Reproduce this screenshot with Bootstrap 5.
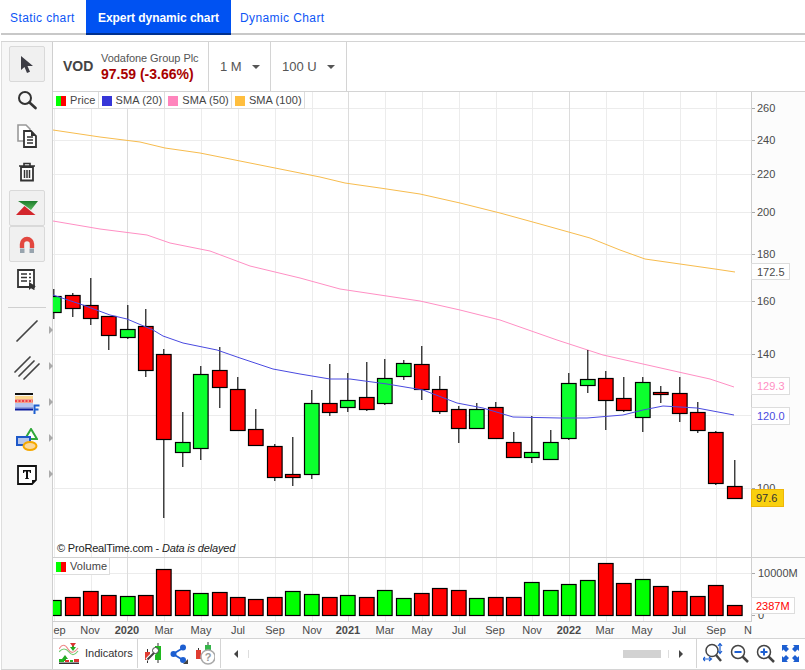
<!DOCTYPE html>
<html lang="en">
<head>
<meta charset="utf-8">
<title>Vodafone chart</title>
<link href="https://cdn.jsdelivr.net/npm/bootstrap@5.3.0/dist/css/bootstrap.min.css" rel="stylesheet">
<style>
html,body{height:670px;overflow:hidden;background:#fff}
body{font-family:"Liberation Sans",Arial,sans-serif;color:#444}
.tabbar{height:35px;margin-left:1px;border-bottom:2px solid #c8c8c8}
.tabbar .nav-link{font-size:12px;letter-spacing:.4px;height:35px;padding:9px 9px 0 9px;color:#0d55f5;border-radius:0;white-space:nowrap}
.tabbar .nav-link:first-child{width:85px}
.tabbar .nav-link.active{background:#0052f2;color:#fff;font-weight:700;padding:9px 0 0;text-align:center;letter-spacing:-.05px;border-bottom:2px solid #00308f;width:145px}
.frame{margin:6px 0 0 1px;height:629px;border-top:1px solid #d4d4d4;border-bottom:1px solid #d4d4d4}
.toolside{width:52px;background:#f7f7f7;border-left:1px solid #dedede;border-right:1px solid #cfcfcf;padding-top:4px}
.toolcell{width:36px;height:36px;margin-left:7px;flex:none;position:relative}
.toolcell.on{background:#f0f0f0;border:1px solid #d9d9d9;border-radius:2px}
.toolcell.more::after{content:"";position:absolute;left:40px;top:13px;border-left:4px solid #aaa;border-top:4px solid transparent;border-bottom:4px solid transparent}
.toolsep{height:15px;flex:none;margin:0 6px}
.toolsep::after{content:"";display:block;height:1px;background:#d0d0d0;margin-top:9px}
.mainpane{width:752px}
.headbar{height:50px;border-bottom:1px solid #d4d4d4;background:#fff}
.headcell{height:49px;border-right:1px solid #d4d4d4}
.symcell{width:156px;padding-left:10px}
.symb{font-size:14px;font-weight:700;width:38px}
.symname{font-size:11px;line-height:13px;color:#555;letter-spacing:-.05px}
.symprice{font-size:14px;line-height:15px;font-weight:700;color:#a80000;margin-top:2px}
.pickcell{font-size:13px;padding-left:11px;color:#555}
.pick-a{width:62px}
.pick-b{width:76px}
.caret-down{display:inline-block;margin-left:10px;border-top:4px solid #555;border-left:4px solid transparent;border-right:4px solid transparent}
.chartzone{height:546px}
.chartzone svg{display:block}
.chartzone text{font-family:"Liberation Sans",Arial,sans-serif;font-size:11px;fill:#4a4a4a}
.legendstrip{position:absolute;left:0;top:0;font-size:11px;background:#fff;border-right:1px solid #ddd;border-bottom:1px solid #ddd;height:17px}
.legendstrip.volstrip{top:466px}
.legitem{height:16px;padding:1px 2px 0 3px;border-right:1px solid #ddd;gap:4px;letter-spacing:.1px}
.legitem:last-child{border-right:0}
.swatch{width:10px;height:10px;display:inline-block}
.swatch.duo{background:linear-gradient(90deg,#0f0 50%,#f00 50%)}
.botbar{height:30px;background:#fff;border-top:1px solid #d4d4d4}
.botcell{height:29px;border-right:1px solid #d4d4d4}
.indcell{width:85px;padding-left:6px;font-size:11px;gap:6px;color:#333}
.actcell{width:83px;padding-left:6px;gap:7px}
.scrollcell{width:476px;padding:0 13px}
.arrow-l{border-right:4px solid #444;border-top:4px solid transparent;border-bottom:4px solid transparent}
.arrow-r{border-left:4px solid #444;border-top:4px solid transparent;border-bottom:4px solid transparent}
.thumbbar{width:38px;height:8px;background:#d2d2d2;margin-left:auto;margin-right:7px}
.tickmark{width:1px;height:8px;background:#ddd}
.gap-ten{margin-left:10px}
.zoomcell{gap:6px;padding-left:6px}
</style>
</head>
<body>
<nav class="nav tabbar">
  <a class="nav-link" href="#">Static chart</a>
  <a class="nav-link active" href="#">Expert dynamic chart</a>
  <a class="nav-link" href="#">Dynamic Chart</a>
</nav>
<div class="d-flex frame">
  <div class="d-flex flex-column toolside">
    <div class="toolcell on d-flex align-items-center justify-content-center">
      <svg width="16" height="18" viewBox="0 0 16 18"><path d="M2 1v14l3.500-3 2.500 6 3-1.300-2.500-5.700H14z" fill="#3c3c44"/></svg>
    </div>
    <div class="toolcell d-flex align-items-center justify-content-center">
      <svg width="20" height="20" viewBox="0 0 20 20"><circle cx="8" cy="8" r="6" fill="none" stroke="#333" stroke-width="2"/><path d="M12.500 12.500 18.500 18" stroke="#333" stroke-width="2.600" stroke-linecap="round"/></svg>
    </div>
    <div class="toolcell d-flex align-items-center justify-content-center">
      <svg width="21" height="24" viewBox="0 0 21 24"><path d="M1 1h8l4 4v12H1z" fill="#fff" stroke="#999" stroke-width="1.600"/><path d="M7 7h7l5 5v11H7z" fill="#fff" stroke="#333" stroke-width="1.800"/><path d="M10 13h6M10 16h6M10 19h6" stroke="#333" stroke-width="1.400"/><path d="M14 7v5h5z" fill="#333"/></svg>
    </div>
    <div class="toolcell d-flex align-items-center justify-content-center">
      <svg width="18" height="20" viewBox="0 0 18 20"><path d="M1 4h16M6 4V1.500h6V4" fill="none" stroke="#333" stroke-width="1.600"/><path d="M3 5h12v13.500H3z" fill="#fff" stroke="#333" stroke-width="1.800"/><path d="M6.500 8v8M9 8v8M11.500 8v8" stroke="#333" stroke-width="1.500"/></svg>
    </div>
    <div class="toolcell on d-flex align-items-center justify-content-center">
      <svg width="24" height="15" viewBox="0 0 24 15"><defs><linearGradient id="gtop" x1="0" y1="0" x2="0" y2="1"><stop offset="0" stop-color="#1e7d2c"/><stop offset="1" stop-color="#58b85c"/></linearGradient></defs><path d="M3 0h20l-7 9-6-4.500z" fill="url(#gtop)"/><path d="M1 14 9.500 5l6 5 5 4z" fill="#d3262c"/></svg>
    </div>
    <div class="toolcell on d-flex align-items-center justify-content-center">
      <svg width="16" height="17" viewBox="0 0 16 17"><path d="M3 12V8a5 5 0 0 1 10 0v4" fill="none" stroke="#e2473f" stroke-width="4.400"/><path d="M1 12.500h4.500V17H1zM10.500 12.500H15V17h-4.500z" fill="#98a4ae"/></svg>
    </div>
    <div class="toolcell d-flex align-items-center justify-content-center">
      <svg width="20" height="22" viewBox="0 0 20 22"><path d="M1 1h16v17H1z" fill="#fff" stroke="#333" stroke-width="1.800"/><path d="M4 5h6M12 5h2M4 8.500h6M12 8.500h2M4 12h6M12 12h2" stroke="#333" stroke-width="1.600"/><path d="M12 13v8l2-1.800 3 1.800 1-1-2-2 3-.5z" fill="#333"/></svg>
    </div>
    <div class="toolsep"></div>
    <div class="toolcell more d-flex align-items-center justify-content-center">
      <svg width="24" height="24" viewBox="0 0 24 24"><path d="M2 22 22 2" stroke="#444" stroke-width="1.700" stroke-linecap="round"/></svg>
    </div>
    <div class="toolcell more d-flex align-items-center justify-content-center">
      <svg width="26" height="26" viewBox="0 0 26 26"><path d="M1 18 16 3M5 22 20 7M10 25 25 10" stroke="#444" stroke-width="1.700" stroke-linecap="round"/></svg>
    </div>
    <div class="toolcell more d-flex align-items-center justify-content-center">
      <svg width="25" height="21" viewBox="0 0 25 21"><path d="M0 0h18v2H0z" fill="#111"/><path d="M0 3h18v3H0z" fill="#fbd58c"/><path d="M0 6h18v4H0z" fill="#f4a08c"/><path d="M0 8h18" stroke="#e23" stroke-width="1.500" stroke-dasharray="2 1.500"/><path d="M0 10h18v4H0z" fill="#b9c6ee"/><path d="M0 14h18v1.500H0z" fill="#8d9fe0"/><path d="M0 15.500h18v2H0z" fill="#0a1a9c"/><path d="M19.500 21v-8.500h5M19.500 16.500h4" fill="none" stroke="#1e5fd0" stroke-width="2"/></svg>
    </div>
    <div class="toolcell more d-flex align-items-center justify-content-center">
      <svg width="22" height="23" viewBox="0 0 22 23"><path d="M15 1 21 11H9z" fill="#fff" stroke="#2fa83a" stroke-width="2"/><path d="M1 9h13v8H1z" fill="#b7c6ea" stroke="#1d58c9" stroke-width="2"/><ellipse cx="14" cy="18" rx="6.500" ry="4" fill="#fbd89b" stroke="#f5a800" stroke-width="2"/></svg>
    </div>
    <div class="toolcell more d-flex align-items-center justify-content-center">
      <svg width="20" height="20" viewBox="0 0 20 20"><path d="M1 1h18v14l-4 4H1z" fill="#fff" stroke="#111" stroke-width="1.800"/><path d="M15 19v-4h4z" fill="#111"/><path d="M6 5h8v3h-1l-.5-1.500H11V13l1 .5v.5H8v-.5l1-.5V6.500H7.500L7 8H6z" fill="#111"/></svg>
    </div>
  </div>
  <div class="mainpane d-flex flex-column">
    <div class="headbar d-flex">
      <div class="headcell symcell d-flex align-items-center">
        <div class="symb">VOD</div>
        <div><div class="symname">Vodafone Group Plc</div><div class="symprice">97.59 (-3.66%)</div></div>
      </div>
      <div class="headcell pickcell pick-a d-flex align-items-center"><span>1 M</span><span class="caret-down"></span></div>
      <div class="headcell pickcell pick-b d-flex align-items-center"><span>100 U</span><span class="caret-down"></span></div>
    </div>
    <div class="chartzone position-relative">
      <svg id="plot" width="752" height="546" viewBox="53 92 752 546" xmlns="http://www.w3.org/2000/svg">
        <rect x="752" y="92" width="53" height="546" fill="#fcfcfc"/>
        <g id="grid"></g>
        <path d="M53 130 100 137 140 142 165 148 200 153 240 161 280 169 320 177 345 183 380 188 420 194 460 203 500 213 540 224 590 238 620 250 645 259 680 264 715 269 735 272" fill="none" stroke="#f7bc4e" stroke-width="1"/>
        <path d="M53 221 100 229 147 235 170 243 210 251 250 266 300 278 340 289 380 295 420 301 460 310 500 320 557 340 603 355 643 364 683 373 710 379 734 387" fill="none" stroke="#ff8fc4" stroke-width="1"/>
        <g id="candles"></g>
        <path d="M53 295 83 305 110 315 127 319 153 330 163 336 183 343 217 350 240 358 273 369 300 374 330 379 350 379 387 384 423 390 457 403 483 408 513 417 560 418 587 418 623 415 643 410 663 406 697 408 734 415" fill="none" stroke="#4a4ae0" stroke-width="1"/>
        <g id="vols"></g>
        <path d="M751.500 92V621M53 557.500H805M53 621.500H752M53 638.500H805" stroke="#cfcfcf" fill="none"/>
        <path d="M752 108.500h3M752 140.500h3M752 174.500h3M752 212.500h3M752 254.500h3M752 301.500h3M752 354.500h3M752 488.500h3M752 573.500h3M752 615.500h3" stroke="#aaa" fill="none"/>
        <g>
          <text x="757" y="112">260</text><text x="757" y="144">240</text><text x="757" y="178">220</text><text x="757" y="216">200</text><text x="757" y="258">180</text><text x="757" y="305">160</text><text x="757" y="358">140</text><text x="757" y="492">100</text>
          <text x="758" y="577">10000M</text><text x="758" y="619">0</text>
        </g>
        <g>
          <rect x="751.500" y="263.500" width="38" height="16" fill="#fff" stroke="#ddd"/><text x="757" y="276">172.5</text>
          <rect x="751.500" y="377.500" width="38" height="17" fill="#fff" stroke="#ddd"/><text x="757" y="390" style="fill:#ff8fc4">129.3</text>
          <rect x="751.500" y="407.500" width="38" height="17" fill="#fff" stroke="#ddd"/><text x="757" y="420" style="fill:#4a4ae0">120.0</text>
          <rect x="751.500" y="489.500" width="32" height="17" fill="#f9d00f" stroke="#eeb60a"/><text x="756" y="502" style="fill:#333">97.6</text>
          <rect x="751.500" y="597.500" width="43" height="16" fill="#fff" stroke="#ddd"/><text x="756" y="610" style="fill:#f00">2387M</text>
        </g>
        <rect x="53" y="622" width="698" height="16" fill="#fafafa"/>
        <text x="53.500" y="634">ep</text>
        <g text-anchor="middle">
          <text x="90" y="634">Nov</text><text x="127" y="634" font-weight="700">2020</text><text x="164" y="634">Mar</text><text x="201" y="634">May</text><text x="238" y="634">Jul</text><text x="275" y="634">Sep</text><text x="312" y="634">Nov</text><text x="348" y="634" font-weight="700">2021</text><text x="385" y="634">Mar</text><text x="422" y="634">May</text><text x="459" y="634">Jul</text><text x="495" y="634">Sep</text><text x="532" y="634">Nov</text><text x="569" y="634" font-weight="700">2022</text><text x="605" y="634">Mar</text><text x="642" y="634">May</text><text x="679" y="634">Jul</text><text x="716" y="634">Sep</text>
        </g>
        <text x="744" y="634">N</text>
        <text x="57" y="552" style="fill:#222;letter-spacing:-.18px">© ProRealTime.com - <tspan font-style="italic">Data is delayed</tspan></text>
      </svg>
      <div class="legendstrip d-flex">
        <div class="legitem d-flex align-items-center"><span class="swatch duo"></span>Price</div>
        <div class="legitem d-flex align-items-center"><span class="swatch" style="background:#3636d8"></span>SMA (20)</div>
        <div class="legitem d-flex align-items-center"><span class="swatch" style="background:#ff85bd"></span>SMA (50)</div>
        <div class="legitem d-flex align-items-center"><span class="swatch" style="background:#ffbe3e"></span>SMA (100)</div>
      </div>
      <div class="legendstrip volstrip d-flex">
        <div class="legitem d-flex align-items-center"><span class="swatch duo"></span>Volume</div>
      </div>
    </div>
    <div class="botbar d-flex">
      <div class="botcell indcell d-flex align-items-center">
        <svg width="20" height="21" viewBox="0 0 20 21"><path d="M0 6c3-5 6-5 9 0s6 4 10-1" fill="none" stroke="#e88" stroke-width="1.200"/><path d="M0 9c3-4 7-4 10 0s6 3 9-1" fill="none" stroke="#7c7" stroke-width="1.200"/><path d="M6 12l3 4H7v2H5v-2H3zM14 8l-3-4h2V2h2v2h2z" fill="#2a2"/><path d="M14 4l-3-4h6z" fill="#d33"/><path d="M0 16h5v3H0zM11 17h3v2h-3z" fill="#1fb91f"/><path d="M6 17h4v2H6zM15 16h5v3h-5z" fill="#d33"/><path d="M0 19.500h20v1.500H0z" fill="#333"/></svg>
        <span>Indicators</span>
      </div>
      <div class="botcell actcell d-flex align-items-center">
        <svg width="19" height="21" viewBox="0 0 19 21"><path d="M3.500 6v14M14 0v20" stroke="#333"/><path d="M1 9h5v8H1z" fill="#e03c31"/><path d="M11 3h6v14h-6z" fill="#1fb91f"/><path d="M3 17 11 9" stroke="#fff" stroke-width="4"/><path d="M3.500 16.500 11 9" stroke="#444" stroke-width="2"/><circle cx="11.500" cy="7.500" r="3" fill="#fff" stroke="#444"/></svg>
        <svg width="18" height="20" viewBox="0 0 18 20"><path d="M3 10 13 4M3 10l10 6" stroke="#1d5fd1" stroke-width="1.800"/><circle cx="3.500" cy="10" r="3" fill="#1d5fd1"/><circle cx="13" cy="3.500" r="3" fill="#1d5fd1"/><circle cx="13" cy="16" r="3" fill="#1d5fd1"/><path d="M18 15v5h-5z" fill="#444"/></svg>
        <svg width="20" height="23" viewBox="0 0 20 23"><path d="M3.500 6v11M13 0v8" stroke="#333"/><path d="M1 8h5v9H1z" fill="#e03c31"/><path d="M10 3h6v5h-6z" fill="#36b54a"/><circle cx="13" cy="15" r="7" fill="#fff" stroke="#aaa" stroke-width="1.500"/><text x="13" y="19" text-anchor="middle" style="font:700 11px 'Liberation Sans',sans-serif;fill:#999">?</text></svg>
      </div>
      <div class="botcell scrollcell d-flex align-items-center">
        <span class="arrow-l"></span><span class="tickmark gap-ten"></span>
        <span class="thumbbar"></span>
        <span class="tickmark"></span><span class="arrow-r gap-ten"></span>
      </div>
      <div class="zoomcell d-flex align-items-center flex-grow-1">
        <svg width="21" height="21" viewBox="0 0 21 21"><circle cx="9" cy="7.500" r="6" fill="#fff" stroke="#444" stroke-width="1.500"/><path d="M13 12l5 6" stroke="#444" stroke-width="2.500"/><path d="M17 1v9M15 3l2-2.500L19 3M15 8l2 2.500L19 8M0 16h8M2 14 0 16l2 2M6 14l2.500 2L6 18" fill="none" stroke="#1d5fd1" stroke-width="1.200"/></svg>
        <svg width="20" height="20" viewBox="0 0 20 20"><circle cx="8" cy="8" r="6.500" fill="#fff" stroke="#444" stroke-width="1.500"/><path d="M12.500 12.500 18 18" stroke="#444" stroke-width="2.500"/><path d="M4.500 8h7" stroke="#1d5fd1" stroke-width="2"/></svg>
        <svg width="20" height="20" viewBox="0 0 20 20"><circle cx="8" cy="8" r="6.500" fill="#fff" stroke="#444" stroke-width="1.500"/><path d="M12.500 12.500 18 18" stroke="#444" stroke-width="2.500"/><path d="M4.500 8h7M8 4.500v7" stroke="#1d5fd1" stroke-width="2"/></svg>
        <svg width="17" height="17" viewBox="0 0 17 17"><path d="M0 0h6L4.500 1.500 7 4 4 7 1.500 4.500 0 6zM17 0v6l-1.500-1.500L13 7l-3-3 2.500-2.500L11 0zM0 17v-6l1.500 1.500L4 10l3 3-2.500 2.500L6 17zM17 17h-6l1.500-1.500L10 13l3-3 2.500 2.500L17 11z" fill="#1d5fd1"/></svg>
      </div>
    </div>
  </div>
</div>
<script>
var NS="http://www.w3.org/2000/svg";
function el(p,n,a){var e=document.createElementNS(NS,n);for(var k in a)e.setAttribute(k,a[k]);p.appendChild(e);return e}
var G="#0cff2e",R="#ff0000";
/* left, wick top, wick bottom, body top, body bottom, candle colour, volume top, volume colour */
var D=[
[46,289,319,296,312,G,600,1],[65,293,317,295,308,R,597,0],[83,278,325,305,318,R,591,0],[101,316,350,316,335,R,595,0],
[120,305,339,329,337,G,596,1],[138,309,377,326,370,R,595,0],[156,349,518,354,439,R,569,0],[175,412,467,442,452,G,590,0],
[193,366,460,374,448,G,593,1],[212,347,408,370,387,R,592,0],[230,377,430,389,430,R,597,0],[248,409,445,429,445,R,599,0],
[267,444,481,446,477,R,597,0],[285,437,486,474,477,R,591,1],[304,390,479,403,474,G,594,1],[322,364,416,403,412,R,597,0],
[340,373,412,400,407,G,595,1],[359,362,411,397,409,R,597,0],[377,359,405,378,403,G,590,1],[396,360,380,363,376,G,598,1],
[414,346,400,364,389,R,593,0],[432,376,414,389,411,R,588,0],[451,406,443,409,428,R,590,0],[469,403,428,409,428,G,598,1],
[488,402,439,407,438,R,597,0],[506,432,457,442,457,R,597,0],[524,416,463,452,457,G,582,1],[543,430,459,442,459,G,590,1],
[561,373,440,383,438,G,584,1],[580,350,393,379,385,G,580,1],[598,371,430,378,400,R,563,0],[616,377,412,398,410,R,583,0],
[635,377,432,382,417,G,579,1],[653,386,403,392,394,R,586,0],[672,377,422,393,413,R,591,0],[690,402,433,412,430,R,596,0],
[708,431,485,432,483,R,585,0],[727,460,498,486,498,R,605,0]];
var g=document.getElementById("grid");
[108,140,174,212,254,301,354,415,488,573].forEach(function(y){el(g,"path",{d:"M53 "+(y+.5)+"H751",stroke:"#ececec"})});
[54,91,127,164,201,238,275,312,348,385,422,459,496,532,569,606,643,680,716].forEach(function(x){
  var bold=(x==127||x==348||x==569);
  el(g,"path",{d:"M"+(x+.5)+" 92V621",stroke:bold?"#dcdcdc":"#ececec"});
  el(g,"path",{d:"M"+(x+.5)+" 621V625",stroke:"#aaa"});
});
var c=document.getElementById("candles"),v=document.getElementById("vols");
D.forEach(function(d){
  var l=d[0]+.5,w=14.6;
  el(c,"path",{d:"M"+(l+w/2)+" "+d[1]+"V"+d[2],stroke:"#000","stroke-width":1.1});
  el(c,"rect",{x:l,y:d[3]+.5,width:w,height:d[4]-d[3],fill:d[5],stroke:"#000","stroke-width":1.2});
  el(v,"rect",{x:l,y:d[6]+.5,width:w,height:615-d[6],fill:d[7]?"#00ff00":"#ff0000",stroke:"#000","stroke-width":1.2});
});
</script>
<script src="https://cdn.jsdelivr.net/npm/bootstrap@5.3.0/dist/js/bootstrap.bundle.min.js"></script>
</body>
</html>
